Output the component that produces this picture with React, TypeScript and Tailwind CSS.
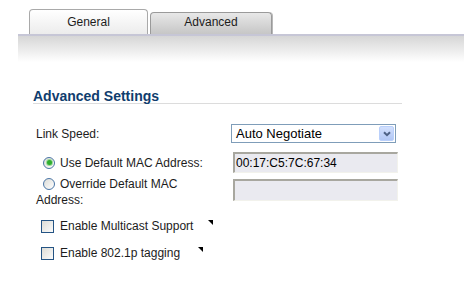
import React from 'react';

function Radio({ checked }: { checked?: boolean }) {
  return (
    <span className="ml-[7px] mr-[5px] flex h-[12px] w-[12px] shrink-0 items-center justify-center rounded-full border border-[#4a75a5] bg-gradient-to-br from-[#dcdcd7] to-white">
      {checked && <span className="h-[5px] w-[5px] rounded-full bg-[#2fae2f] ring-1 ring-[#9bd89b]" />}
    </span>
  );
}

function Checkbox() {
  return (
    <span className="ml-[5px] mr-[6px] h-[13px] w-[13px] shrink-0 border border-[#245484] bg-gradient-to-br from-[#dcdcd6] to-[#fbfbfb]" />
  );
}

function Marker({ gap }: { gap: string }) {
  return (
    <span
      className={`mt-[2px] h-0 w-0 self-start border-l-[5px] border-t-[5px] border-l-transparent border-t-black ${gap}`}
    />
  );
}

function TextBox({ value, h }: { value?: string; h: string }) {
  return (
    <div
      className={`flex w-[165px] items-center border-l-2 border-t-2 border-b border-r border-l-[#a8a79f] border-t-[#a8a79f] border-b-[#f2f2ec] border-r-[#f2f2ec] bg-[#eaeaf0] pl-[1px] text-[12px] text-black ${h}`}
    >
      {value}
    </div>
  );
}

export default function App() {
  return (
    <div className="h-[287px] w-[464px] overflow-hidden bg-white font-['Liberation_Sans',Arial,sans-serif] text-[12px] text-[#1c1c1c]">
      {/* tab strip */}
      <div className="ml-[18px] flex items-end border-b-2 border-[#c6c6d6] pl-[11px] pt-[9px]">
        <div className="flex h-[25px] w-[119px] items-center justify-center rounded-t-[4px] border border-b-0 border-[#a9a9a9] bg-gradient-to-b from-white to-[#ececec] leading-[16px]">
          General
        </div>
        <div className="ml-[2px] flex h-[22px] w-[122px] justify-center rounded-t-[4px] border border-b-0 border-[#9a9a9a] bg-gradient-to-b from-[#e8e8e8] to-[#c6c6c6] pt-[1px] leading-[16px] shadow-[1px_0_0_#b8b8b8]">
          Advanced
        </div>
      </div>
      <div className="ml-[18px] h-[26px] bg-gradient-to-b from-[#d6d6d6] to-white" />

      <div className="ml-[33px] mt-[27px] w-[369px] border-b border-[#dcdcdc] text-[14px] font-bold leading-[14px] text-[#0f3d6e]">
        Advanced Settings
      </div>

      <div className="ml-[36px] mt-[20px]">
        <div className="flex h-[19px] items-center">
          <div className="w-[195px]">Link Speed:</div>
          <div className="flex h-[19px] w-[165px] items-center border border-[#7f9db9] bg-white pl-[4px] text-[13px] text-black">
            <span>Auto Negotiate</span>
            <span className="ml-auto mr-[1px] flex h-[15px] w-[15px] items-center justify-center rounded-[2px] border border-[#bad0fb] bg-gradient-to-b from-[#d2e0fd] to-[#b2c7f5]">
              <svg width="8" height="6" viewBox="0 0 8 6">
                <path d="M1 1.2 L4 4.2 L7 1.2" fill="none" stroke="#4d6185" strokeWidth="2" />
              </svg>
            </span>
          </div>
        </div>

        <div className="mt-[9px] flex h-[21px] items-center">
          <div className="flex w-[197px] items-center">
            <Radio checked />
            <span>Use Default MAC Address:</span>
          </div>
          <TextBox value="00:17:C5:7C:67:34" h="h-[21px]" />
        </div>

        <div className="mt-[3px] flex items-start">
          <div className="w-[197px] leading-[16px]">
            <div className="flex h-[16px] items-center">
              <Radio />
              <span>Override Default MAC</span>
            </div>
            <div className="h-[16px]">Address:</div>
          </div>
          <div className="mt-[3px]">
            <TextBox h="h-[22px]" />
          </div>
        </div>

        <div className="mt-[10px] flex h-[16px] items-center">
          <Checkbox />
          <span>Enable Multicast Support</span>
          <Marker gap="ml-[15px]" />
        </div>

        <div className="mt-[11px] flex h-[16px] items-center">
          <Checkbox />
          <span>Enable 802.1p tagging</span>
          <Marker gap="ml-[18px]" />
        </div>
      </div>
    </div>
  );
}
